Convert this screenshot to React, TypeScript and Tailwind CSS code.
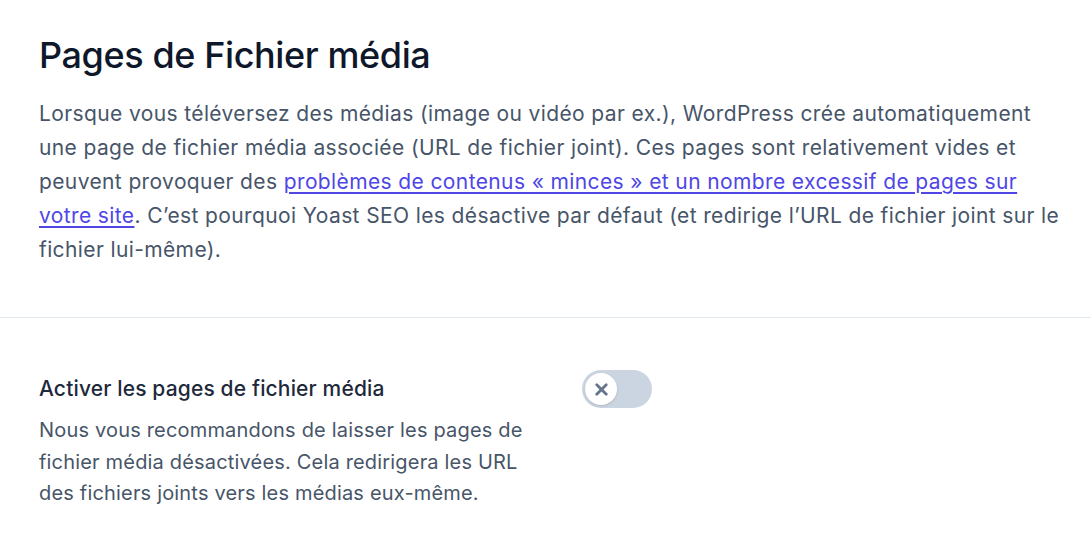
import { X } from "lucide-react"

function App() {
  return (
    <div className="min-h-screen bg-white font-['Inter',sans-serif]">
      <div className="pl-[39px] pr-[28px] pt-[33px] pb-[50px]">
        <h1 className="text-[36px] leading-[44px] font-medium text-[#0f172a] tracking-[-0.4px]">
          Pages de Fichier média
        </h1>
        <p className="mt-[20px] text-[21px] leading-[34px] text-[#475569] tracking-[0.38px]">
          Lorsque vous téléversez des médias (image ou vidéo par ex.), WordPress crée automatiquement
          une page de fichier média associée (URL de fichier joint). Ces pages sont relativement vides et
          peuvent provoquer des{" "}
          <a href="#" className="text-[#4f46e5] underline underline-offset-[3px]">
            problèmes de contenus « minces » et un nombre excessif de pages sur votre site
          </a>
          . C’est pourquoi Yoast SEO les désactive par défaut (et redirige l’URL de fichier joint sur le
          fichier lui-même).
        </p>
      </div>

      <div className="border-t border-[#e2e8f0]" />

      <div className="px-[39px] pt-[58px] grid grid-cols-[520px_auto] gap-x-[23px] items-start">
        <div>
          <h2 className="text-[21px] leading-[26px] font-medium text-[#1e293b] tracking-[0.15px]">
            Activer les pages de fichier média
          </h2>
          <p className="mt-[13px] text-[20px] leading-[31.5px] text-[#475569] tracking-[0.18px] max-w-[495px]">
            Nous vous recommandons de laisser les pages de fichier média désactivées. Cela redirigera les URL
            des fichiers joints vers les médias eux-même.
          </p>
        </div>
        <button
          type="button"
          className="mt-[-6px] w-[70px] h-[38px] rounded-full bg-[#cbd5e1] flex items-center px-[3px]"
        >
          <span className="w-[32px] h-[32px] rounded-full bg-white shadow flex items-center justify-center">
            <X className="w-[19px] h-[19px] text-[#64748b]" strokeWidth={3.5} />
          </span>
        </button>
      </div>
    </div>
  )
}

export default App
